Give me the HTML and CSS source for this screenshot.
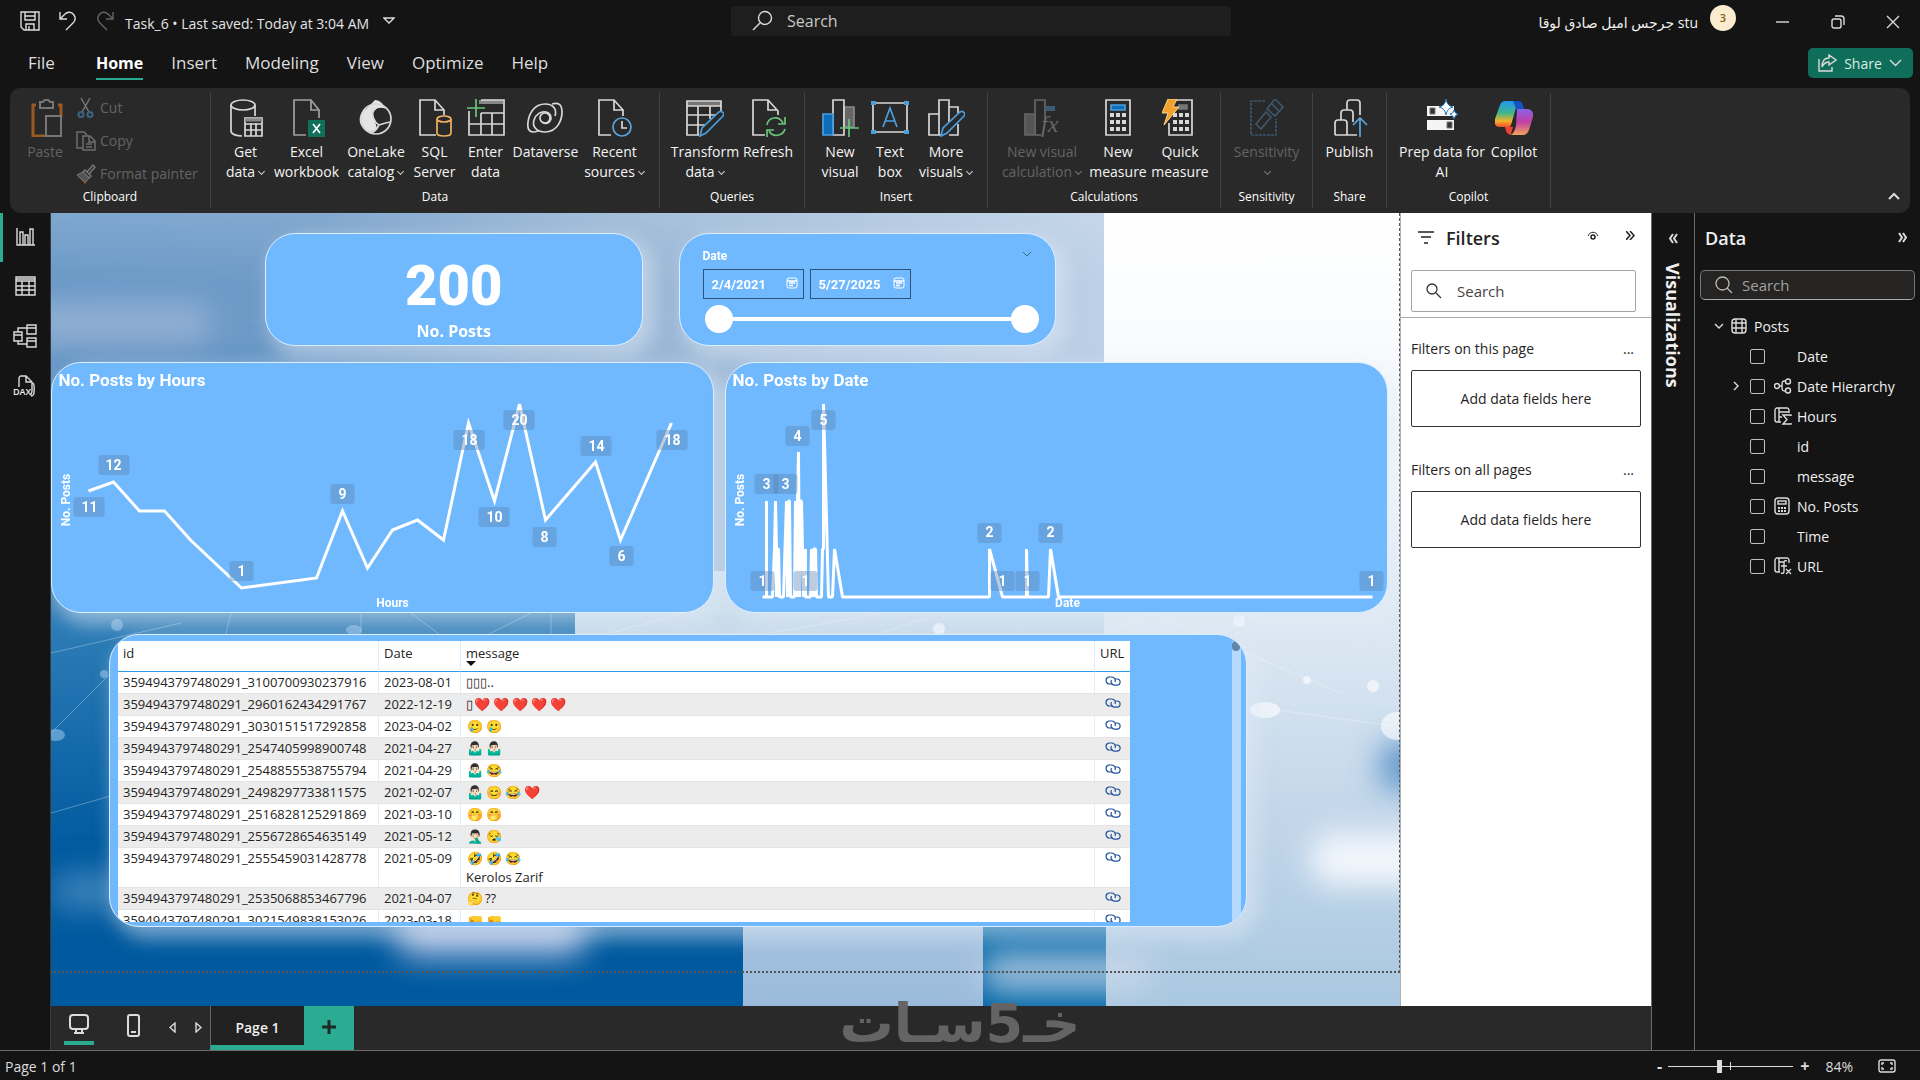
FILE: index.html
```html
<!DOCTYPE html>
<html lang="en">
<head>
<meta charset="utf-8">
<title>Task_6</title>
<link rel="stylesheet" href="styles.css">
</head>
<body>
<div class="app">
  <header class="titlebar">
    <div class="title-left">
      <button class="icon-btn" aria-label="Save"><svg width="20" height="20" viewBox="0 0 20 20" class="line"><path d="M1 1h18v18H4l-3-3zM5 1v8h10V1M5 5h10M6 19v-6h8v6M9 15v4"/></svg></button>
      <button class="icon-btn" aria-label="Undo"><svg width="18" height="20" viewBox="0 0 18 20" class="line"><path d="M1 1v7h7M1 8l5-5c3-3 7-2 9 1s1 6-1 8l-7 7"/></svg></button>
      <button class="icon-btn dim" aria-label="Redo"><svg width="18" height="20" viewBox="0 0 18 20" class="line"><path d="M17 1v7h-7M17 8l-5-5C9 0 5 1 3 4s-1 6 1 8l7 7"/></svg></button>
      <span class="doc-name">Task_6 • Last saved: Today at 3:04 AM</span>
      <button class="icon-btn" aria-label="File details"><svg width="12" height="8" viewBox="0 0 12 8" class="line"><path d="M1 1h10L6 6z"/></svg></button>
    </div>
    <label class="top-search">
      <svg width="22" height="22" viewBox="0 0 22 22" class="line"><circle cx="14" cy="8" r="6.500"/><path d="M9 13l-7 7"/></svg>
      <input type="text" placeholder="Search" aria-label="Search">
    </label>
    <div class="title-right">
      <span class="user" dir="rtl">stu جرجس اميل صادق لوقا</span>
      <span class="avatar">3</span>
      <button class="win-btn" aria-label="Minimize"><svg width="14" height="14" viewBox="0 0 14 14" class="line"><path d="M0 7h13"/></svg></button>
      <button class="win-btn" aria-label="Restore"><svg width="14" height="14" viewBox="0 0 14 14" class="line"><rect x="1" y="4" width="9" height="9" rx="2"/><path d="M4 1h6a3 3 0 0 1 3 3v6"/></svg></button>
      <button class="win-btn" aria-label="Close"><svg width="14" height="14" viewBox="0 0 14 14" class="line"><path d="M1 1l12 12M13 1L1 13"/></svg></button>
    </div>
  </header>

  <nav class="menubar">
    <a href="#">File</a><a href="#" class="active">Home</a><a href="#">Insert</a><a href="#">Modeling</a><a href="#">View</a><a href="#">Optimize</a><a href="#">Help</a>
    <button class="share"><svg width="20" height="20" viewBox="0 0 20 20" class="line"><path d="M2 6v12h13v-4M12 2l7 5-7 5V9c-3 0-5 1-7 5 0-5 2-9 7-9z"/></svg>Share<svg width="13" height="8" viewBox="0 0 13 8" class="line"><path d="M1 1l5.500 5.500L12 1"/></svg></button>
  </nav>

  <section class="ribbon" aria-label="Ribbon">
    <div class="group g-clip">
      <div class="tools">
        <button class="tool dim" disabled>
          <svg width="36" height="38" viewBox="-3 0 36 38"><path d="M6 6H3v31h12M28 6h3v12" fill="none" stroke="#9a5a22" stroke-width="3"/><path d="M10 3h3c1-3 6-3 7 0h3v6H10z" fill="#292929" stroke="#777" stroke-width="2"/><path d="M16 17h15v20H16z" fill="#292929" stroke="#777" stroke-width="2"/></svg>
          <span>Paste</span></button>
        <div class="stack">
          <button class="mini" disabled><svg width="20" height="22" viewBox="0 0 20 22"><path d="M5 1l8 14M14 1L6 15" stroke="#777" fill="none" stroke-width="1.500"/><circle cx="5" cy="17.500" r="2.500" stroke="#3d6480" fill="none" stroke-width="2"/><circle cx="14" cy="17.500" r="2.500" stroke="#3d6480" fill="none" stroke-width="2"/></svg>Cut</button>
          <button class="mini" disabled><svg width="20" height="22" viewBox="0 0 20 22" fill="none" stroke="#6d6d6d" stroke-width="1.500"><path d="M7 18H1V2h7l3 3M7 6h7l5 5v9H7zM13 6v6h6M10 14h6M10 17h6"/></svg>Copy</button>
          <button class="mini" disabled><svg width="20" height="22" viewBox="0 0 20 22"><path d="M11 9l6-7 2 2-6 7M9 7l6 6-2 2-6-6z" fill="none" stroke="#777" stroke-width="1.500"/><path d="M7 9l6 6-4 5-3-3-5-5z" fill="#555" stroke="#777"/><path d="M5 15l5 4-1 2z" fill="#a05a1c"/></svg>Format painter</button>
        </div>
      </div>
      <h2>Clipboard</h2>
    </div>

    <div class="group g-data">
      <div class="tools">
        <button class="tool"><svg width="36" height="38" viewBox="2 0 36 38" class="big"><ellipse cx="17" cy="6" rx="12" ry="5"/><path d="M5 6v26c0 3 5 5 11 5M29 6v11"/><path d="M19 19h17v18H19z" fill="#292929"/><path d="M19 21h17" stroke-width="3" stroke="#888"/><path d="M19 25h17M19 31h17M25 24v13M30 24v13"/></svg><span>Get<br>data<i></i></span></button>
        <button class="tool"><svg width="36" height="38" viewBox="0 0 36 38" class="big gray"><path d="M17 36H5V1h17l8 10v8M22 1v10h8"/><path d="M19 21h17v17H19z" fill="#10705a" stroke="none"/><path d="M24 25l7 9M31 25l-7 9" stroke="#fff"/></svg><span>Excel<br>workbook</span></button>
        <button class="tool"><svg width="36" height="38" viewBox="0 0 36 38" class="big"><path d="M8 10L17 1c4 0 8 3 11 9-7-3-12 0-13 6l4 13c-4 5-9 5-13 1C-1 24 1 14 8 10z" fill="#e4e4e4" stroke="none"/><circle cx="18" cy="20" r="15"/><path d="M15 9c-2 7 1 14 6 17 4-1 8-3 12-3M21 26c-2 4-5 7-8 8"/></svg><span>OneLake<br>catalog<i></i></span></button>
        <button class="tool"><svg width="36" height="38" viewBox="0 0 36 38" class="big"><path d="M19 36H3V1h15l9 10v5M18 1v10h9"/><g fill="#292929" stroke="#f0b060"><path d="M20 20v14c0 4 14 4 14 0V20"/><ellipse cx="27" cy="20" rx="7" ry="3"/></g></svg><span>SQL<br>Server</span></button>
        <button class="tool"><svg width="38" height="38" viewBox="0 0 38 38" class="big"><path d="M12 3h24" stroke="#888" stroke-width="4"/><path d="M14 1h23v35H2V12M2 25h35M14 14h23M14 14v22M25 14v22" /><path d="M0 9h18M9 0v18" stroke="#68c67c"/></svg><span>Enter<br>data</span></button>
        <button class="tool"><svg width="38" height="38" viewBox="0 0 38 38" class="big"><path d="M26 5c7-2 10 1 10 8s-4 20-17 20c-9 0-13-6-11-12s7-9 12-8 6 6 4 9-6 3-7 1M12 32c-8 3-11-1-10-9S8 5 19 5c9 0 12 6 10 12"/><circle cx="19" cy="19" r="5"/></svg><span>Dataverse</span></button>
        <button class="tool"><svg width="36" height="38" viewBox="0 0 36 38" class="big"><path d="M15 36H3V1h15l9 10v6M18 1v10h9"/><circle cx="26" cy="28" r="9" fill="#292929" stroke="#5aa5dd"/><path d="M26 22v7h5"/></svg><span>Recent<br>sources<i></i></span></button>
      </div>
      <h2>Data</h2>
    </div>

    <div class="group g-queries">
      <div class="tools">
        <button class="tool"><svg width="38" height="38" viewBox="0 0 38 38" class="big"><path d="M1 2h34v5H1z" fill="#777"/><path d="M1 7v29h12M1 16h34M1 26h18M12 7v29M24 7v13M35 7v5"/><path d="M14 37l2-8 17-16c3-2 6 2 4 4L20 34z" fill="#292929" stroke="#4a9ede"/></svg><span>Transform<br>data<i></i></span></button>
        <button class="tool"><svg width="36" height="38" viewBox="0 0 36 38" class="big"><path d="M15 36H3V1h15l10 11v4M18 1v10h9"/><path d="M17 26c1-8 12-10 16-2M35 18v7h-7M35 30c-2 7-12 9-16 2M17 38v-7h7" stroke="#68c67c"/></svg><span>Refresh</span></button>
      </div>
      <h2>Queries</h2>
    </div>

    <div class="group g-insert">
      <div class="tools">
        <button class="tool"><svg width="38" height="38" viewBox="0 0 38 38" class="big"><path d="M23 8h10v20H23z" fill="#666" stroke="#888"/><path d="M12 1h11v35H12z"/><path d="M2 15h10v21H2z" fill="#0f6cb8" stroke="#4a9ede"/><path d="M19 29h19M28 20v18" stroke="#68c67c"/></svg><span>New<br>visual</span></button>
        <button class="tool"><svg width="38" height="38" viewBox="0 0 38 38" class="big"><path d="M2 4h34v29H2z"/><path d="M12 28l7-19 7 19M14 22h10" stroke="#4a9ede"/><path d="M0 2h5v4H0zM33 2h5v4h-5zM0 31h5v4H0zM33 31h5v4h-5z" fill="#4a9ede" stroke="none"/></svg><span>Text<br>box</span></button>
        <button class="tool"><svg width="38" height="38" viewBox="0 0 38 38" class="big"><path d="M12 36V1h10v22M12 15H2v21h12M22 8h9v6M22 36h9V25"/><path d="M14 37l2-8 17-16c3-2 6 2 4 4L20 34z" fill="#292929" stroke="#4a9ede"/></svg><span>More<br>visuals<i></i></span></button>
      </div>
      <h2>Insert</h2>
    </div>

    <div class="group g-calc">
      <div class="tools">
        <button class="tool dim" disabled><svg width="38" height="38" viewBox="0 0 38 38" class="big"><g stroke="#666"><path d="M12 36V1h10v22"/><path d="M2 15h10v21H2z" fill="#555"/><path d="M13 36h5"/></g><path d="M23 7h9v5h-9z" fill="#3a5a78" stroke="none"/><text x="18" y="33" class="fx">fx</text></svg><span>New visual<br>calculation<i></i></span></button>
        <button class="tool"><svg width="26" height="38" viewBox="0 0 26 38" class="big"><path d="M1 1h24v35H1z"/><path d="M6 6h14v5H6z" fill="#0f6cb8" stroke="#4a9ede"/><path d="M5 16h16M5 23h16M5 30h16" stroke-width="4" stroke-dasharray="4 2"/></svg><span>New<br>measure</span></button>
        <button class="tool"><svg width="36" height="38" viewBox="2 0 36 38" class="big"><path d="M14 1h18v35H9V24"/><path d="M19 6h8v4h-8z" fill="#777" stroke="#777"/><path d="M13 16h16M13 23h16M13 30h16" stroke-width="4" stroke-dasharray="4 2"/><path d="M8 0h9l-4 8h6L4 26l4-12H2z" fill="#f2a12c" stroke="#ffd58c" stroke-width="1"/></svg><span>Quick<br>measure</span></button>
      </div>
      <h2>Calculations</h2>
    </div>

    <div class="group g-sens">
      <div class="tools">
        <button class="tool dim" disabled><svg width="38" height="38" viewBox="0 0 38 38" class="big"><g stroke="#3c566c"><path d="M18 2H4v34h25V20" stroke-dasharray="3 1"/><path d="M9 25l10-12 5 5-10 12zM20 10l8-10 8 8-8 9zM25 5l8 8"/></g></svg><span>Sensitivity<br><i></i></span></button>
      </div>
      <h2>Sensitivity</h2>
    </div>

    <div class="group g-share">
      <div class="tools">
        <button class="tool"><svg width="36" height="38" viewBox="-1 0 36 38" class="big"><path d="M2 36V24c0-2 1-3 3-3h6c2 0 3 1 3 3v12M8 21v-7c0-2 1-3 3-3h6c2 0 3 1 3 3v9M14 11V4c0-2 1-3 3-3h7c2 0 3 1 3 3v12M2 36h22"/><path d="M27 38V19M20 26l7-7 7 7" stroke="#5aa5dd"/></svg><span>Publish</span></button>
      </div>
      <h2>Share</h2>
    </div>

    <div class="group g-copilot">
      <div class="tools">
        <button class="tool"><svg width="34" height="38" viewBox="0 0 34 38"><path d="M2 7h27v10H2z" fill="#f4f4f4"/><path d="M2 21h27v10H2z" fill="#f4f4f4"/><path d="M5 9h5v6H5zM22 23h5v6h-5z" fill="#333" stroke="#777"/><path d="M21 0q1 7 7 8-6 1-7 8-1-7-7-8 6-1 7-8zM29 11q1 4 4 4-3 1-4 5-1-4-4-5 3 0 4-4z" fill="#fff" stroke="#2277bb"/></svg><span>Prep data for<br>AI</span></button>
        <button class="tool"><svg width="38" height="38" viewBox="0 0 38 38"><defs><linearGradient id="ca" x1="0" y1="0" x2="0" y2="1"><stop offset="0" stop-color="#2196f3"/><stop offset=".45" stop-color="#3fb68b"/><stop offset=".75" stop-color="#f3b32a"/><stop offset="1" stop-color="#f0442e"/></linearGradient><linearGradient id="cb" x1="0" y1="0" x2="0" y2="1"><stop offset="0" stop-color="#8a63e8"/><stop offset=".5" stop-color="#c13fa6"/><stop offset="1" stop-color="#f2a35b"/></linearGradient></defs><path d="M10 2h13l-7 24c-1 3-3 3-6 2H5c-5 0-6-4-5-8L5 6c1-3 3-4 5-4z" fill="url(#ca)"/><path d="M18 2h5c4 0 5 3 6 8h-8z" fill="#1554c0"/><path d="M22 10h10c5 0 7 4 6 8l-4 13c-1 3-3 5-6 5H16c3-2 4-6 5-9z" fill="url(#cb)"/><path d="M10 28h8c-1 4-3 8-1 8-5 0-6-4-7-8z" fill="#f0442e"/></svg><span>Copilot</span></button>
      </div>
      <h2>Copilot</h2>
    </div>
    <button class="collapse" aria-label="Collapse ribbon"><svg width="12" height="8" viewBox="0 0 12 8" class="line thick"><path d="M1 7l5-5 5 5"/></svg></button>
  </section>

  <div class="workspace">
    <nav class="rail">
      <button class="on" aria-label="Report view"><svg width="20" height="20" viewBox="0 0 20 20" class="line"><path d="M1 1v17h18M4 18V5h3v13M9 18V8h3v10M14 18V2h3v16"/></svg></button>
      <button aria-label="Table view"><svg width="21" height="20" viewBox="0 0 21 20" class="line"><path d="M1 1h19v18H1zM1 3h19M1 5h19M1 10h19M1 14h19M7 5v14M14 5v14"/></svg></button>
      <button aria-label="Model view"><svg width="24" height="24" viewBox="0 0 24 24" class="line"><path d="M14 1h9v9h-9zM14 4h9M1 8h8v9H1zM1 11h8M14 14h9v9h-9zM14 17h9M5 8V4h9M5 17v3h9"/></svg></button>
      <button aria-label="DAX query view"><svg width="24" height="22" viewBox="0 0 24 22" class="line"><path d="M6 12V3c0-1 1-2 2-2h5l6 6v9c0 2 0 3-2 4M13 1v6h6M20 8c2 2 1 8 1 10s-2 3-3 3"/><text x="0" y="20" class="dax">DAX</text></svg></button>
    </nav>

    <main class="stage">
      <div class="canvas">
        <svg class="backdrop" viewBox="0 0 1349 793" preserveAspectRatio="none" aria-hidden="true">
          <defs>
            <linearGradient id="sky" x1="0" y1="0" x2="1" y2="0"><stop offset="0" stop-color="#6a99c7"/><stop offset=".25" stop-color="#6f9bc8"/><stop offset=".5" stop-color="#93b2d3"/><stop offset="1" stop-color="#bdd0e6"/></linearGradient>
            <linearGradient id="deep" x1="0" y1="0" x2="0" y2="1"><stop offset="0" stop-color="#5f92c3"/><stop offset=".25" stop-color="#2c7cb6"/><stop offset="1" stop-color="#005a9f"/></linearGradient>
            <linearGradient id="pale" x1="0" y1="0" x2="0" y2="1"><stop offset="0" stop-color="#fff"/><stop offset=".35" stop-color="#f2f7fc"/><stop offset=".5" stop-color="#dfeaf4"/><stop offset=".75" stop-color="#c4d7ea"/><stop offset="1" stop-color="#a9c8e1"/></linearGradient>
            <linearGradient id="mid" x1="0" y1="0" x2="0" y2="1"><stop offset="0" stop-color="#cfe0ee"/><stop offset="1" stop-color="#9bbbdc"/></linearGradient>
            <linearGradient id="haze" x1="0" y1="0" x2="0" y2="1"><stop offset="0" stop-color="#fff" stop-opacity=".14"/><stop offset=".2" stop-color="#fff" stop-opacity="0"/></linearGradient>
            <filter id="soft" x="-50%" y="-80%" width="200%" height="260%"><feGaussianBlur stdDeviation="15"/></filter>
          </defs>
          <rect width="1349" height="793" fill="url(#pale)"/>
          <rect width="1053" height="358" fill="url(#sky)"/>
          <rect width="1053" height="358" fill="url(#haze)"/>
          <rect y="358" width="1053" height="435" fill="url(#mid)"/>
          <rect y="340" width="524" height="300" fill="url(#deep)"/>
          <rect y="640" width="692" height="153" fill="#005a9f"/>
          <rect x="932" y="640" width="123" height="153" fill="#0067a8"/>
          <g filter="url(#soft)">
            <rect x="-40" y="90" width="200" height="40" rx="18" fill="#93b0d4"/>
            <rect x="0" y="145" width="210" height="24" fill="#5a90c4"/>
            <rect x="345" y="696" width="190" height="48" rx="20" fill="#a9bee0"/>
            <rect x="0" y="660" width="90" height="36" rx="18" fill="#3d83bb"/>
            <rect x="930" y="738" width="170" height="42" rx="18" fill="#cbd8ea" opacity=".75"/>
            <rect x="1330" y="530" width="60" height="46" fill="#5f97cb"/>
            <rect x="1260" y="620" width="130" height="52" rx="20" fill="#f3f7fc"/>
          </g>
          <g stroke="#fff" stroke-opacity=".3" fill="none"><path d="M0 440L130 410M170 440l30-120M310 430V400M360 400l40 30M420 430l60-30M0 520l60-60M0 600l70-20M500 440V400M1100 400l190 80M1212 495l130 18M1200 405l70-45M1060 420l60-30M830 420l60-20M720 420l110-20M560 420l90-25"/></g>
          <g fill="#fff" fill-opacity=".6"><ellipse cx="1214" cy="497" rx="15" ry="8"/><ellipse cx="1346" cy="513" rx="16" ry="14"/><circle cx="1322" cy="473" r="6"/><circle cx="1188" cy="408" r="6"/><circle cx="888" cy="416" r="6"/><circle cx="1256" cy="467" r="4"/></g>
          <g fill="#8fc0e8" fill-opacity=".6"><ellipse cx="303" cy="417" rx="8" ry="5"/><circle cx="66" cy="412" r="6"/><ellipse cx="5" cy="522" rx="9" ry="6"/><circle cx="53" cy="461" r="4"/></g>
        </svg>
        <div class="report">
          <div class="row row-top">
            <section class="visual card"><strong>200</strong><span>No. Posts</span></section>
            <section class="visual slicer">
              <header><span>Date</span><svg width="10" height="7" viewBox="0 0 10 7" fill="none" stroke="#3c6a96"><path d="M1 1l4 4 4-4"/></svg></header>
              <div class="dates">
                <label><input type="text" value="2/4/2021" aria-label="Start date"><svg width="12" height="12" viewBox="0 0 12 12" fill="none" stroke="#fff"><rect x="1" y="1" width="10" height="10" rx="2"/><path d="M1 4h10M3 6h6M3 8.500h4" stroke-width="1.500"/></svg></label>
                <label><input type="text" value="5/27/2025" aria-label="End date"><svg width="12" height="12" viewBox="0 0 12 12" fill="none" stroke="#fff"><rect x="1" y="1" width="10" height="10" rx="2"/><path d="M1 4h10M3 6h6M3 8.500h4" stroke-width="1.500"/></svg></label>
              </div>
              <div class="range"><input type="range" value="0" aria-label="Range start"><input type="range" value="100" aria-label="Range end"></div>
            </section>
          </div>
          <div class="row row-charts">
            <section class="visual chart">
              <svg viewBox="1 1 660 249" role="img" aria-label="No. Posts by Hours">
                <text x="7" y="24" class="c-title">No. Posts by Hours</text>
                <polyline points="37,129 62,120 88,149 113,149 139,178 190,226 265,216 291,149 316,206 341,168 366,158 392,178 417,61 443,139 468,42 494,158 544,100 569,178 620,61"/>
                <g class="tags">
                  <rect x="47" y="93" width="31" height="20" rx="3"/><rect x="22" y="135" width="31" height="20" rx="3"/><rect x="178" y="199" width="24" height="20" rx="3"/><rect x="279" y="122" width="24" height="20" rx="3"/><rect x="402" y="68" width="31" height="20" rx="3"/><rect x="452" y="48" width="31" height="20" rx="3"/><rect x="427" y="145" width="31" height="20" rx="3"/><rect x="481" y="165" width="24" height="20" rx="3"/><rect x="529" y="74" width="31" height="20" rx="3"/><rect x="558" y="184" width="24" height="20" rx="3"/><rect x="605" y="68" width="31" height="20" rx="3"/>
                </g>
                <g class="vals"><text x="62" y="108">12</text><text x="38" y="150">11</text><text x="190" y="214">1</text><text x="291" y="137">9</text><text x="418" y="83">18</text><text x="468" y="63">20</text><text x="443" y="160">10</text><text x="493" y="180">8</text><text x="545" y="89">14</text><text x="570" y="199">6</text><text x="621" y="83">18</text></g>
                <g class="axis"><text x="341" y="245">Hours</text><text transform="translate(18 138) rotate(-90)">No. Posts</text></g>
              </svg>
            </section>
            <section class="visual chart">
              <svg viewBox="1 1 660 249" role="img" aria-label="No. Posts by Date">
                <text x="7" y="24" class="c-title">No. Posts by Date</text>
                <polyline class="dense" points="37,235 41,235 41,139 41,235 47,235 49,187 50,139 51,187 51,235 51,187 53,187 54,235 58,235 61,139 62,235 63,139 64,139 65,235 69,235 70,139 71,235 72,139 73,90 74,235 75,139 76,139 78,235 80,187 80,235 85,235 86,187 88,235 88,187 90,187 91,235 96,235 97,187 98,187 98,42 103,235 107,235 109,187 117,235 264,235 264,187 277,235 301,235 301,187 302,235 323,235 325,187 333,235 647,235"/>
                <g class="tags">
                  <rect x="29" y="112" width="24" height="20" rx="3"/><rect x="48" y="112" width="24" height="20" rx="3"/><rect x="60" y="64" width="24" height="20" rx="3"/><rect x="86" y="48" width="24" height="20" rx="3"/><rect x="25" y="209" width="24" height="20" rx="3"/><rect x="68" y="209" width="24" height="20" rx="3"/><rect x="252" y="161" width="24" height="20" rx="3"/><rect x="265" y="209" width="24" height="20" rx="3"/><rect x="290" y="209" width="24" height="20" rx="3"/><rect x="313" y="161" width="24" height="20" rx="3"/><rect x="634" y="209" width="24" height="20" rx="3"/>
                </g>
                <g class="vals"><text x="41" y="127">3</text><text x="60" y="127">3</text><text x="72" y="79">4</text><text x="98" y="63">5</text><text x="37" y="224">1</text><text x="80" y="224">1</text><text x="264" y="175">2</text><text x="277" y="224">1</text><text x="302" y="224">1</text><text x="325" y="175">2</text><text x="646" y="224">1</text></g>
                <g class="axis"><text x="342" y="245">Date</text><text transform="translate(18 138) rotate(-90)">No. Posts</text></g>
              </svg>
            </section>
          </div>
          <div class="row row-table">
            <section class="visual grid-visual">
              <div class="table-view">
              <table>
                <colgroup><col class="c-id"><col class="c-date"><col><col class="c-url"></colgroup>
                <thead><tr><th>id</th><th>Date</th><th class="sorted">message</th><th>URL</th></tr></thead>
                <tbody>
                  <tr><td>3594943797480291_3100700930237916</td><td>2023-08-01</td><td>▯▯▯..</td><td class="u"><a href="#" aria-label="Open post"><svg width="16" height="10" viewBox="0 0 16 10"><use href="#lnk"/></svg></a></td></tr>
                  <tr><td>3594943797480291_2960162434291767</td><td>2022-12-19</td><td>▯<b>❤️</b><b>❤️</b><b>❤️</b><b>❤️</b><b>❤️</b></td><td class="u"><a href="#" aria-label="Open post"><svg width="16" height="10" viewBox="0 0 16 10"><use href="#lnk"/></svg></a></td></tr>
                  <tr><td>3594943797480291_3030151517292858</td><td>2023-04-02</td><td><b>🥲</b><b>🥲</b></td><td class="u"><a href="#" aria-label="Open post"><svg width="16" height="10" viewBox="0 0 16 10"><use href="#lnk"/></svg></a></td></tr>
                  <tr><td>3594943797480291_2547405998900748</td><td>2021-04-27</td><td><b>🤷🏻‍♂️</b><b>🤷🏻‍♂️</b></td><td class="u"><a href="#" aria-label="Open post"><svg width="16" height="10" viewBox="0 0 16 10"><use href="#lnk"/></svg></a></td></tr>
                  <tr><td>3594943797480291_2548855538755794</td><td>2021-04-29</td><td><b>🤷🏻‍♂️</b><b>😂</b></td><td class="u"><a href="#" aria-label="Open post"><svg width="16" height="10" viewBox="0 0 16 10"><use href="#lnk"/></svg></a></td></tr>
                  <tr><td>3594943797480291_2498297733811575</td><td>2021-02-07</td><td><b>🤷🏻‍♂️</b><b>😊</b><b>😂</b><b>❤️</b></td><td class="u"><a href="#" aria-label="Open post"><svg width="16" height="10" viewBox="0 0 16 10"><use href="#lnk"/></svg></a></td></tr>
                  <tr><td>3594943797480291_2516828125291869</td><td>2021-03-10</td><td><b>🤭</b><b>🤭</b></td><td class="u"><a href="#" aria-label="Open post"><svg width="16" height="10" viewBox="0 0 16 10"><use href="#lnk"/></svg></a></td></tr>
                  <tr><td>3594943797480291_2556728654635149</td><td>2021-05-12</td><td><b>🤦🏻‍♂️</b><b>😪</b></td><td class="u"><a href="#" aria-label="Open post"><svg width="16" height="10" viewBox="0 0 16 10"><use href="#lnk"/></svg></a></td></tr>
                  <tr class="tall"><td>3594943797480291_2555459031428778</td><td>2021-05-09</td><td><b>🤣</b><b>🤣</b><b>😂</b><br>Kerolos Zarif</td><td class="u"><a href="#" aria-label="Open post"><svg width="16" height="10" viewBox="0 0 16 10"><use href="#lnk"/></svg></a></td></tr>
                  <tr><td>3594943797480291_2535068853467796</td><td>2021-04-07</td><td><b>🤔</b>??</td><td class="u"><a href="#" aria-label="Open post"><svg width="16" height="10" viewBox="0 0 16 10"><use href="#lnk"/></svg></a></td></tr>
                  <tr><td>3594943797480291_3021549838153026</td><td>2023-03-18</td><td><b>🤛</b><b>🤛</b></td><td class="u"><a href="#" aria-label="Open post"><svg width="16" height="10" viewBox="0 0 16 10"><use href="#lnk"/></svg></a></td></tr>
                </tbody>
              </table>
              </div>
              <div class="scroll"><span></span></div>
            </section>
          </div>
        </div>
        <svg width="0" height="0" class="defs"><symbol id="lnk" viewBox="0 0 16 10"><g fill="none" stroke="#1d4f9c" stroke-width="1.200"><path d="M8 8H4.500a3.500 3.500 0 1 1 0-7H7a3.500 3.500 0 0 1 3 5"/><path d="M10 3h2a3 3 0 0 1 0 6.200H9A3.500 3.500 0 0 1 6.500 4"/></g></symbol></svg>
      </div>

      <aside class="filters">
        <header>
          <svg width="16" height="13" viewBox="0 0 16 13" fill="none" stroke="#222" stroke-width="1.500"><path d="M0 1h16M3 6h10M6 12h4"/></svg>
          <h3>Filters</h3>
          <button class="plain" aria-label="Show filters"><svg width="12" height="10" viewBox="0 0 12 10" fill="none" stroke="#222"><path d="M1 5c2-5 8-5 10 0"/><circle cx="6" cy="6" r="2" stroke-width="1.500"/></svg></button>
          <button class="plain" aria-label="Collapse filters"><svg width="9" height="9" viewBox="0 0 9 9" fill="none" stroke="#222" stroke-width="1.500"><path d="M0 0l4 4.500L0 9M4 0l4 4.500L4 9"/></svg></button>
        </header>
        <label class="f-search"><svg width="16" height="16" viewBox="0 0 16 16" fill="none" stroke="#333" stroke-width="1.300"><circle cx="6" cy="6" r="5"/><path d="M10 10l5 5"/></svg><input type="text" placeholder="Search" aria-label="Search filters"></label>
        <div class="f-body">
          <div class="f-head"><span>Filters on this page</span><button class="plain" aria-label="More options">...</button></div>
          <div class="drop">Add data fields here</div>
          <div class="f-head"><span>Filters on all pages</span><button class="plain" aria-label="More options">...</button></div>
          <div class="drop">Add data fields here</div>
        </div>
      </aside>

      <footer class="pagebar">
        <button class="device on" aria-label="Desktop layout"><svg width="22" height="22" viewBox="0 0 22 22" class="line thick"><rect x="2" y="1" width="18" height="14" rx="3"/><path d="M8 15v3M14 15v3M6 19h10"/></svg></button>
        <button class="device" aria-label="Mobile layout"><svg width="14" height="24" viewBox="0 0 14 24" class="line thick"><rect x="1" y="1" width="11" height="21" rx="2"/><path d="M4 18h5"/></svg></button>
        <button class="arrow" aria-label="Previous page"><svg width="7" height="11" viewBox="0 0 7 11" class="line"><path d="M6 1v9L1 5.500z"/></svg></button>
        <button class="arrow" aria-label="Next page"><svg width="7" height="11" viewBox="0 0 7 11" class="line"><path d="M1 1v9l5-4.500z"/></svg></button>
        <button class="page-tab">Page 1</button>
        <button class="add" aria-label="New page"><svg width="14" height="14" viewBox="0 0 14 14" stroke="#1d2b28" stroke-width="3"><path d="M7 0v14M0 7h14"/></svg></button>
        <div class="mark" aria-hidden="true">خـ5سـات</div>
      </footer>
    </main>

    <aside class="viz">
      <button class="plain" aria-label="Expand visualizations"><svg width="9" height="11" viewBox="0 0 9 11" class="line thick"><path d="M4 1L1 5.500 4 10M8 1L5 5.500 8 10"/></svg></button>
      <h3>Visualizations</h3>
    </aside>

    <aside class="data">
      <header><h3>Data</h3><button class="plain" aria-label="Collapse data"><svg width="9" height="11" viewBox="0 0 9 11" class="line thick"><path d="M1 1l3 4.500L1 10M5 1l3 4.500L5 10"/></svg></button></header>
      <label class="d-search"><svg width="18" height="18" viewBox="0 0 18 18" fill="none" stroke="#bbb" stroke-width="1.300"><circle cx="7.500" cy="7.500" r="6.500"/><path d="M12 12l5 5"/></svg><input type="text" placeholder="Search" aria-label="Search data"></label>
      <ul class="tree">
        <li class="root"><svg class="tw line" width="10" height="7" viewBox="0 0 10 7"><path d="M1 1l4 4 4-4"/></svg><svg width="16" height="16" viewBox="0 0 16 16" class="line"><rect x="1" y="1" width="14" height="14" rx="3"/><path d="M1 5h14M1 10h14M5 1v14M11 1v14"/></svg><span>Posts</span></li>
        <li><label><span class="tw"></span><input type="checkbox"><span class="ic"></span>Date</label></li>
        <li><label><span class="tw"><svg width="6" height="10" viewBox="0 0 6 10" class="line"><path d="M1 1l4 4-4 4"/></svg></span><input type="checkbox"><span class="ic"><svg width="18" height="16" viewBox="0 0 18 16" class="line"><circle cx="3" cy="8" r="2.500"/><circle cx="14" cy="3.500" r="2.500"/><circle cx="14" cy="12.500" r="2.500"/><path d="M6 8h2M11 3c-3 0-3 1-3 5s0 5 3 5"/></svg></span>Date Hierarchy</label></li>
        <li><label><span class="tw"></span><input type="checkbox"><span class="ic"><svg width="18" height="18" viewBox="0 0 18 18" class="line"><path d="M15 6V3c0-1-1-2-2-2H3C2 1 1 2 1 3v10c0 1 1 2 2 2h4M5 1v14M5 5h10M5 10h3"/><path d="M17 9V8H9l4 4.500L9 17h8v-1"/></svg></span>Hours</label></li>
        <li><label><span class="tw"></span><input type="checkbox"><span class="ic"></span>id</label></li>
        <li><label><span class="tw"></span><input type="checkbox"><span class="ic"></span>message</label></li>
        <li><label><span class="tw"></span><input type="checkbox"><span class="ic"><svg width="16" height="18" viewBox="0 0 16 18" class="line"><rect x="1" y="1" width="14" height="16" rx="3"/><rect x="4" y="4" width="8" height="3"/><path d="M4 11h8M4 14h8" stroke-width="2" stroke-dasharray="2 1"/></svg></span>No. Posts</label></li>
        <li><label><span class="tw"></span><input type="checkbox"><span class="ic"></span>Time</label></li>
        <li><label><span class="tw"></span><input type="checkbox"><span class="ic"><svg width="18" height="18" viewBox="0 0 18 18" class="line"><path d="M15 6V3c0-1-1-2-2-2H3C2 1 1 2 1 3v10c0 1 1 2 2 2h3M5 1v14M5 5h5M13 4c-2-1-3 0-3 2v8c0 2-1 3-3 2M7 9h6M12 12l5 5M17 12l-5 5"/></svg></span>URL</label></li>
      </ul>
    </aside>
  </div>

  <footer class="status">
    <span>Page 1 of 1</span>
    <div class="zoom">
      <button class="plain" aria-label="Zoom out">-</button>
      <input type="range" min="0" max="100" value="41" aria-label="Zoom level">
      <button class="plain" aria-label="Zoom in">+</button>
      <span class="pct">84%</span>
      <button class="plain" aria-label="Fit to page"><svg width="18" height="14" viewBox="0 0 18 14" class="line"><rect x="1" y="1" width="16" height="12" rx="2"/><path d="M4 6V4h2M12 4h2v2M14 8v2h-2M6 10H4V8"/></svg></button>
    </div>
  </footer>
</div>
</body>
</html>
```
FILE: styles.css
```css
* { box-sizing: border-box; }
body { margin: 0; background: #141414; color: #f0f0f0; font-family: "Open Sans", "Noto Sans", "DejaVu Sans", sans-serif; font-size: 14px; }
button, input { font: inherit; color: inherit; background: none; border: 0; padding: 0; margin: 0; }
input { outline: none; min-width: 0; }
h2, h3 { margin: 0; }
svg { display: block; flex: none; }
.line { fill: none; stroke: #dcdcdc; stroke-width: 1.4; }
.line.thick { stroke-width: 2; }
.app { min-height: 100vh; display: flex; flex-direction: column; overflow: hidden; }

.titlebar { display: grid; grid-template-columns: 731fr 500fr 689fr; height: 42px; }
.title-left { display: flex; align-items: center; padding-left: 20px; white-space: nowrap; }
.title-left .icon-btn { margin-right: 19px; }
.title-left .dim { margin-right: 11px; opacity: .4; }
.doc-name { margin: 5px 14px 0 0; color: #e4e4e4; }
.top-search { display: flex; align-items: center; gap: 14px; height: 30px; margin-top: 6px; padding-left: 20px; background: #1e1e1e; border-radius: 3px; font-size: 16px; }
.top-search input { flex: 1; }
.top-search input::placeholder { color: #c8c8c8; }
.title-right { display: flex; justify-content: flex-end; align-items: center; padding: 2px 20px 0 0; }
.user { font-size: 14px; margin-right: 12px; white-space: nowrap; }
.avatar { width: 26px; height: 26px; margin: 0 40px 8px 0; border-radius: 50%; background: #fbeccf; color: #8a5a1a; font-size: 11px; font-weight: 600; line-height: 26px; text-align: center; }
.win-btn { margin-left: 41px; }
.avatar + .win-btn { margin-left: 0; }

.menubar { display: flex; align-items: center; gap: 28px; height: 46px; padding: 0 7px 4px 28px; font-size: 17px; }
.menubar a { color: #dedede; text-decoration: none; padding: 4px 0 2px; border-bottom: 2px solid transparent; line-height: 26px; }
.menubar a:first-child { margin-right: 13px; }
.menubar .active { color: #fff; font-weight: 700; font-size: 16px; border-color: #2aab92; }
.share { display: flex; align-items: center; justify-content: space-between; width: 105px; height: 30px; margin-left: auto; padding: 0 11px 0 9px; background: #0f6e5a; border-radius: 5px; font-size: 14px; color: #d8ece6; }

.ribbon { display: flex; margin: 0 10px; height: 125px; padding: 5px 0; background: #292929; border-radius: 10px; }
.group { display: flex; flex-direction: column; justify-content: space-between; border-right: 1px solid #444; }
.group h2 { font-size: 12px; font-weight: 400; line-height: 16px; text-align: center; color: #fff; height: 19px; }
.tools { display: grid; padding-top: 6px; justify-content: center; }
.tool { display: flex; flex-direction: column; align-items: center; line-height: 20px; white-space: nowrap; justify-self: center; }
.tool span { margin-top: 5px; color: #f4f4f4; }
.tool.dim span, .mini { color: #646464; }
.tool i { display: inline-block; width: 5px; height: 5px; margin: 0 1px 3px 4px; border: solid #ccc; border-width: 0 1px 1px 0; rotate: 45deg; }
.tool.dim i { border-color: #777; }
.big { fill: none; stroke: #d8d8d8; stroke-width: 1.7; }
.big.gray { stroke: #a0a0a0; }
.fx { font: italic 24px "Liberation Serif", serif; fill: #666; stroke: none; }
.g-clip { width: 201px; }
.g-clip .tools { grid-template-columns: 50px 132px; justify-content: start; padding-left: 10px; }
.stack { display: flex; flex-direction: column; gap: 11px; padding-left: 6px; margin-top: -2px; }
.mini { display: flex; align-items: center; gap: 4px; line-height: 22px; white-space: nowrap; }
.g-data { width: 449px; }
.g-data .tools { grid-template-columns: 46px 76px 63px 54px 48px 72px 66px; }
.g-queries { width: 145px; }
.g-queries .tools { grid-template-columns: 72px 54px; }
.g-insert { width: 183px; }
.g-insert .tools { grid-template-columns: 50px 50px 62px; }
.g-calc { width: 233px; }
.g-calc .tools { grid-template-columns: 90px 62px 62px; }
.g-sens { width: 92px; }
.g-share { width: 74px; }
.g-copilot { width: 164px; }
.g-copilot .tools { grid-template-columns: 94px 50px; justify-content: start; padding-left: 8px; }
.collapse { margin: auto 10px 8px auto; }

.workspace { flex: 1; display: grid; grid-template-columns: 51px minmax(0, 1fr) 43px 225px; }
.rail { border-right: 1px solid #3a3a3a; }
.rail button { display: grid; place-items: center; width: 50px; height: 50px; border-left: 2px solid transparent; padding: 0 2px 2px 0; }
.rail .on { border-left: 3px solid #2aab92; height: 49px; }
.dax { font: 600 9px "Open Sans", sans-serif; fill: #eee; stroke: none; }
.stage { display: grid; grid-template-columns: minmax(0, 1fr) 251px; grid-template-rows: 1fr 44px; border-right: 1px solid #6b6b6b; }
.canvas { position: relative; background: #c4d7ea; overflow: hidden; }
.backdrop { position: absolute; inset: 0; width: 100%; height: 100%; }
.defs { position: absolute; }
.report { position: relative; display: flex; flex-direction: column; padding: 20px 0 44px; border-bottom: 2px dotted #555; border-right: 1px dashed #555; }
.row { display: grid; grid-template-columns: minmax(0, 1fr) minmax(0, 1fr); }
.row-top { padding: 0 343px 0 214px; gap: 36px; }
.row-charts { padding: 0 11px 0 0; gap: 11px; margin-top: 16px; }
.row-table { grid-template-columns: minmax(0, 1fr); padding: 0 152px 0 58px; margin-top: 21px; }
.visual { background: #70b9ff; border: 1px solid #dceeff; border-radius: 30px; box-shadow: 8px 8px 18px 4px rgba(225, 236, 248, .5); font-family: Roboto, sans-serif; font-weight: 700; color: #fff; overflow: hidden; }
.card { display: flex; flex-direction: column; align-items: center; height: 113px; padding-top: 23px; }
.card strong { font-size: 56px; line-height: 58px; }
.card span { font: 700 16px/24px "Open Sans", sans-serif; margin-top: 4px; }
.slicer { height: 113px; padding: 14px 22px 0 23px; }
.slicer header { display: flex; justify-content: space-between; font-size: 12px; line-height: 16px; }
.slicer header svg { margin: 3px 1px 0 0; }
.dates { display: flex; gap: 6px; margin-top: 5px; }
.dates label { display: flex; align-items: center; justify-content: space-between; width: 101px; height: 30px; padding: 0 5px 0 8px; border: 1px solid #2d5378; }
.dates input { width: 68px; font-size: 13px; }
.dates svg { margin-bottom: 3px; }
.range { position: relative; height: 28px; margin: 6px -6px 0 2px; }
.range::before { content: ""; position: absolute; inset: 12px 14px; background: #fff; }
.range input { position: absolute; inset: 0; width: 100%; height: 28px; appearance: none; pointer-events: none; }
.range input::-webkit-slider-thumb { appearance: none; width: 28px; height: 28px; border-radius: 50%; background: #fff; pointer-events: auto; }
.slicer .range { margin-right: -6px; }
.chart { height: 251px; }
.chart svg { width: 100%; height: 100%; }
.chart text { fill: #fff; font-weight: 700; }
.chart .c-title { font-size: 17px; }
.chart polyline { fill: none; stroke: #fff; stroke-width: 3; stroke-linejoin: miter; }
.chart .dense { stroke-linejoin: bevel; }
.tags rect { fill: rgba(90, 130, 175, .4); }
.vals { font-size: 14px; text-anchor: middle; }
.axis { font-size: 12px; text-anchor: middle; }

.grid-visual { display: flex; height: 293px; padding: 6px 5px 4px 8px; font: 400 13px "Open Sans", sans-serif; color: #252423; }
.table-view { flex: 1; min-width: 0; overflow: hidden; }
table { width: 100%; table-layout: fixed; border-collapse: separate; border-spacing: 0; }
.c-id { width: 260px; }
.c-date { width: 82px; }
.c-url { width: 36px; }
th { height: 31px; padding: 4px 4px 0 5px; background: #fff; font-weight: 400; text-align: left; vertical-align: top; line-height: 16px; border-bottom: 1px solid #2f9ae8; border-left: 1px solid #dbeeff; }
td { height: 22px; padding: 1px 4px 0 5px; line-height: 19px; vertical-align: top; white-space: nowrap; border-left: 1px solid #dbeeff; border-bottom: 1px solid #e4e4e4; }
th:first-child, td:first-child { border-left: 0; }
tbody tr { background: #fff; }
tbody tr:nth-child(even) { background: #ececec; }
.tall td { height: 40px; }
.sorted::after { content: ""; display: block; width: 0; border: 5px solid transparent; border-top: 5px solid #111; border-bottom: 0; }
td b { display: inline-block; width: 19px; font: 400 13px/19px "Noto Color Emoji", "Open Sans", sans-serif; text-align: center; vertical-align: top; }
.u { padding: 4px 0 0; }
.u a { display: flex; justify-content: center; }
.scroll { width: 9px; margin: 0 0 0 102px; background: #b4d9fc; }
.scroll span { display: block; width: 8px; height: 10px; border-radius: 4px; background: #5f86ad; }

.filters { background: #fff; color: #252423; border-left: 1px solid #b0b0b0; }
.filters header { display: flex; align-items: center; height: 49px; padding: 0 16px 0 17px; }
.filters h3 { flex: 1; font-size: 18px; font-weight: 600; margin-left: 12px; }
.filters header .plain { margin: 0 0 4px 27px; }
.f-search { display: flex; align-items: center; gap: 15px; height: 42px; margin: 8px 15px 5px 10px; padding: 0 14px; border: 1px solid #a5a5a5; border-radius: 2px; font-size: 15px; }
.f-search input { flex: 1; }
.f-search input::placeholder { color: #444; }
.f-body { border-top: 1px solid #aaa; padding: 19px 10px 0; }
.f-head { display: flex; justify-content: space-between; line-height: 24px; padding-right: 7px; }
.drop { height: 57px; margin: 9px 0 31px; border: 1px solid #333; border-radius: 2px; line-height: 55px; text-align: center; }

.pagebar { grid-column: 1 / -1; position: relative; display: flex; background: #292929; }
.device { display: flex; flex-direction: column; align-items: center; width: 30px; padding-top: 8px; margin-left: 13px; }
.device.on { border-bottom: 4px solid #2aab92; margin-bottom: 5px; }
.device + .device { margin-left: 25px; }
.arrow { margin: 0 0 2px 20px; }
.arrow + .arrow { margin: 0 8px 2px 19px; }
.page-tab { width: 94px; border-bottom: 5px solid #2aab92; border-left: 1px solid #666; background: #212121; font-weight: 600; padding-top: 4px; }
.add { display: grid; place-items: center; width: 50px; background: #2aab92; padding-bottom: 3px; }
.mark { position: absolute; left: 744px; top: -12px; width: 330px; text-align: center; direction: rtl; font: 700 54px/60px "DejaVu Sans", sans-serif; color: #646464; z-index: 2; }

.viz { display: flex; flex-direction: column; align-items: center; border-right: 1px solid #6b6b6b; padding-top: 20px; }
.viz h3 { writing-mode: vertical-rl; font-size: 18px; font-weight: 700; margin-top: 19px; }
.data header { display: flex; align-items: center; justify-content: space-between; height: 49px; padding: 0 13px 0 10px; }
.data h3 { font-size: 18px; font-weight: 600; }
.d-search { display: flex; align-items: center; gap: 9px; height: 30px; margin: 8px 5px 0; padding: 0 14px; background: #252423; border: 1px solid #777; border-bottom-color: #aaa; border-radius: 5px; font-size: 15px; }
.d-search input { flex: 1; }
.d-search input::placeholder { color: #a0a0a0; }
.tree { list-style: none; margin: 11px 0 0; padding: 0; }
.tree li, .tree label { display: flex; align-items: center; height: 30px; }
.root { padding-left: 19px; gap: 7px; }
.tree .tw { width: 17px; margin-left: 38px; }
.root .tw.line { width: 10px; margin: 0; }
.tree input { appearance: none; width: 15px; height: 15px; border: 1px solid #c0c0c0; border-radius: 2px; }
.ic { width: 32px; padding-left: 9px; }

.status { display: flex; align-items: center; justify-content: space-between; height: 30px; padding: 1px 24px 0 5px; border-top: 1px solid #6b6b6b; color: #ddd; }
.zoom { display: flex; align-items: center; }
.zoom .plain { font-weight: 700; font-size: 16px; line-height: 20px; }
.zoom input { width: 125px; height: 14px; margin: 0 7px 0 6px; appearance: none; background: linear-gradient(#ddd, #ddd) 62px 3px / 1px 8px no-repeat, linear-gradient(#ddd, #ddd) 0 7px / 100% 1px no-repeat; }
.zoom input::-webkit-slider-thumb { appearance: none; width: 5px; height: 13px; background: #ddd; }
.pct { margin: 0 25px 0 16px; }
```
